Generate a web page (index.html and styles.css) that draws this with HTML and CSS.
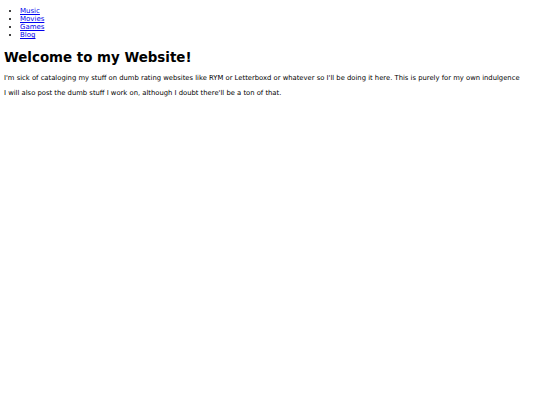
FILE: index.html
```html
<!DOCTYPE html>
<html>
<head>
<meta charset="utf-8">
<link rel="stylesheet" href="styles.css">
</head>
<body class="page">
<ul class="nav">
<li><a href="#">Music</a></li>
<li><a href="#">Movies</a></li>
<li><a href="#">Games</a></li>
<li><a href="#">Blog</a></li>
</ul>
<h1 class="title">Welcome to my Website!</h1>
<p class="text">I'm sick of cataloging my stuff on dumb rating websites like RYM or Letterboxd or whatever so I'll be doing it here. This is purely for my own indulgence</p>
<p class="text">I will also post the dumb stuff I work on, although I doubt there'll be a ton of that.</p>
</body>
</html>
```
FILE: styles.css
```css
.page {
  margin: 0 4px 4px;
  font-family: "DejaVu Sans", Verdana, sans-serif;
  font-size: 7px;
  color: #000;
  background: #fff;
}
.nav {
  margin: 7px 0 7px;
  padding-left: 16px;
}
.nav a {
  color: #0000ee;
}
.title {
  font-size: 13.4px;
  font-weight: bold;
  margin: 11px 0 9px;
}
.text {
  font-size: 6.8px;
  margin: 7px 0;
}
```
